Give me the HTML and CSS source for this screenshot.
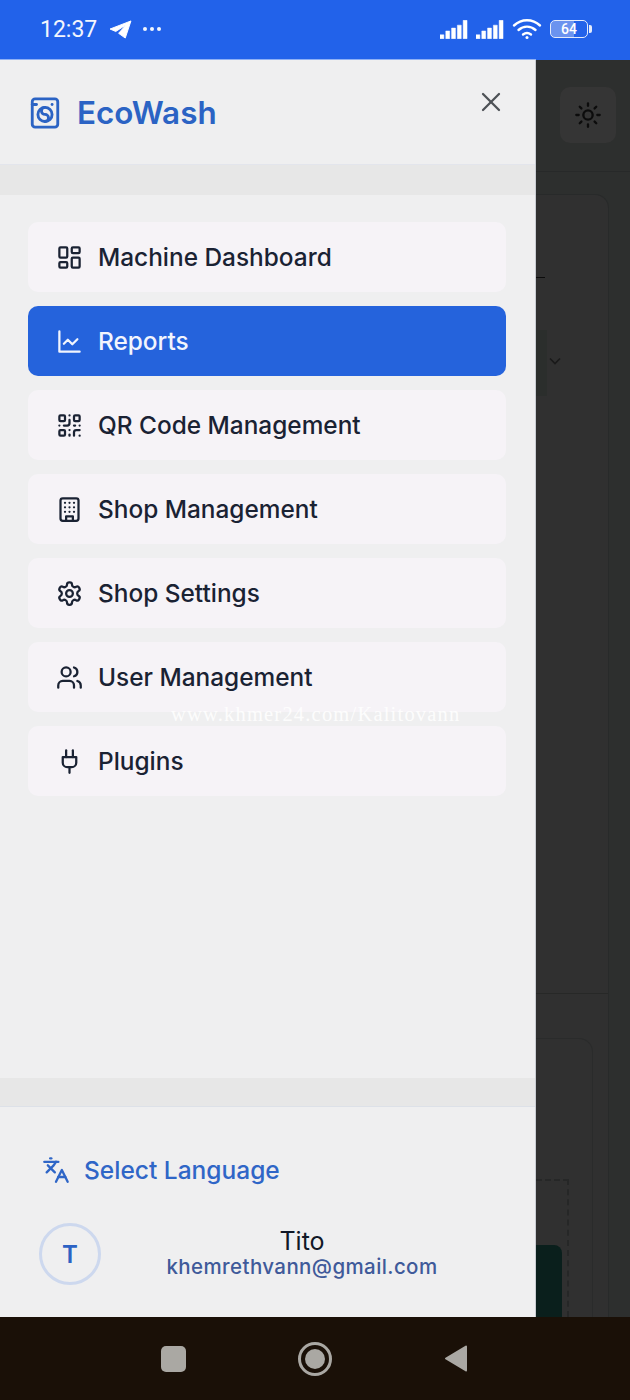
FILE: index.html
```html
<!DOCTYPE html>
<html lang="en">
<head>
    <meta charset="UTF-8">
    <meta name="viewport" content="width=device-width, initial-scale=1.0">
    <title>EcoWash</title>
    <link rel="stylesheet" href="styles.css">
</head>
<body>
    <div class="status-bar">
        <div class="status-left">
            <span class="clock">12:37</span>
            <svg class="tg-icon" viewBox="0 0 24 20"><path d="M23 1 1 9.500l6 2.600L18 5l-8 9 7 5z" fill="#fff" stroke="#fff" stroke-linejoin="round"/></svg>
            <span class="status-dots"><i></i><i></i><i></i></span>
        </div>
        <div class="status-right">
            <svg class="signal" viewBox="0 0 29 19"><path d="M0 15h4v4H0zM6 11h4v8H6zM12 8h4v11h-4zM18 5h4v14h-4zM24 0h4v19h-4z" fill="#fff" stroke="#fff" stroke-width=".5" stroke-linejoin="round"/></svg>
            <svg class="signal" viewBox="0 0 29 19"><path d="M0 15h4v4H0zM6 11h4v8H6zM12 8h4v11h-4zM18 5h4v14h-4zM24 0h4v19h-4z" fill="#fff" stroke="#fff" stroke-width=".5" stroke-linejoin="round"/></svg>
            <svg class="wifi" viewBox="0 0 30 22" fill="none" stroke="#fff" stroke-width="2.400" stroke-linecap="round"><path d="M2 7.500C9.500.5 20.500.5 28 7.500"/><path d="M6.500 12c5-4.500 12-4.500 17 0"/><path d="M11 16.500c2.500-2 5.500-2 8 0"/><circle cx="15" cy="19.500" r="1.500" fill="#fff" stroke="none"/></svg>
            <div class="battery">
                <div class="battery-body"><span class="battery-level">64</span></div>
                <div class="battery-tip"></div>
            </div>
        </div>
    </div>

    <div class="screen">
        <aside class="drawer">
            <header class="drawer-head">
                <div class="brand">
                    <svg class="brand-icon" viewBox="0 0 24 24"><path d="M3 6h3"/><path d="M17 6h.01"/><rect width="18" height="20" x="3" y="2" rx="2"/><circle cx="12" cy="13" r="5"/><path d="M12 18a2.500 2.500 0 0 0 0-5 2.500 2.500 0 0 1 0-5"/></svg>
                    <span>EcoWash</span>
                </div>
                <svg class="close-icon" viewBox="0 0 24 24"><path d="M18 6 6 18"/><path d="m6 6 12 12"/></svg>
            </header>
            <div class="band"></div>

            <nav class="menu">
                <a class="menu-item">
                    <svg class="icon" viewBox="0 0 24 24"><rect width="7" height="9" x="3" y="3" rx="1"/><rect width="7" height="5" x="14" y="3" rx="1"/><rect width="7" height="9" x="14" y="12" rx="1"/><rect width="7" height="5" x="3" y="16" rx="1"/></svg>
                    Machine Dashboard
                </a>
                <a class="menu-item active">
                    <svg class="icon" viewBox="0 0 24 24"><path d="M3 3v18h18"/><path d="m19 10-4.500 4.500-4-4L7 14"/></svg>
                    Reports
                </a>
                <a class="menu-item">
                    <svg class="icon" viewBox="0 0 24 24"><rect width="5" height="5" x="3" y="3" rx="1"/><rect width="5" height="5" x="16" y="3" rx="1"/><rect width="5" height="5" x="3" y="16" rx="1"/><path d="M21 16h-3a2 2 0 0 0-2 2v3"/><path d="M21 21v.01"/><path d="M12 7v3a2 2 0 0 1-2 2H7"/><path d="M3 12h.01"/><path d="M12 3h.01"/><path d="M12 16v.01"/><path d="M16 12h1"/><path d="M21 12v.01"/><path d="M12 21v-1"/></svg>
                    QR Code Management
                </a>
                <a class="menu-item">
                    <svg class="icon" viewBox="0 0 24 24"><rect width="16" height="20" x="4" y="2" rx="2"/><path d="M9 22v-4h6v4"/><path d="M8 6h.01M16 6h.01M12 6h.01M12 10h.01M12 14h.01M16 10h.01M16 14h.01M8 10h.01M8 14h.01"/></svg>
                    Shop Management
                </a>
                <a class="menu-item">
                    <svg class="icon" viewBox="0 0 24 24"><path d="M12.220 2h-.44a2 2 0 0 0-2 2v.18a2 2 0 0 1-1 1.730l-.43.25a2 2 0 0 1-2 0l-.15-.08a2 2 0 0 0-2.730.73l-.22.38a2 2 0 0 0 .73 2.730l.15.1a2 2 0 0 1 1 1.720v.51a2 2 0 0 1-1 1.740l-.15.09a2 2 0 0 0-.73 2.730l.22.38a2 2 0 0 0 2.730.73l.15-.08a2 2 0 0 1 2 0l.43.25a2 2 0 0 1 1 1.730V20a2 2 0 0 0 2 2h.44a2 2 0 0 0 2-2v-.18a2 2 0 0 1 1-1.730l.43-.25a2 2 0 0 1 2 0l.15.08a2 2 0 0 0 2.730-.73l.22-.39a2 2 0 0 0-.73-2.730l-.15-.08a2 2 0 0 1-1-1.740v-.5a2 2 0 0 1 1-1.740l.15-.09a2 2 0 0 0 .73-2.730l-.22-.38a2 2 0 0 0-2.730-.73l-.15.08a2 2 0 0 1-2 0l-.43-.25a2 2 0 0 1-1-1.730V4a2 2 0 0 0-2-2z"/><circle cx="12" cy="12" r="3"/></svg>
                    Shop Settings
                </a>
                <a class="menu-item">
                    <svg class="icon" viewBox="0 0 24 24"><path d="M16 21v-2a4 4 0 0 0-4-4H6a4 4 0 0 0-4 4v2"/><circle cx="9" cy="7" r="4"/><path d="M22 21v-2a4 4 0 0 0-3-3.870"/><path d="M16 3.130a4 4 0 0 1 0 7.750"/></svg>
                    User Management
                </a>
                <a class="menu-item">
                    <svg class="icon" viewBox="0 0 24 24"><path d="M12 22v-5"/><path d="M9 8V2"/><path d="M15 8V2"/><path d="M18 8v5a4 4 0 0 1-4 4h-4a4 4 0 0 1-4-4V8Z"/></svg>
                    Plugins
                </a>
            </nav>

            <div class="band band-low"></div>
            <footer class="drawer-foot">
                <div class="language">
                    <svg class="lang-icon" viewBox="0 0 24 24"><path d="m5 8 6 6"/><path d="m4 14 6-6 2-3"/><path d="M2 5h12"/><path d="M7 2h1"/><path d="m22 22-5-10-5 10"/><path d="M14 18h6"/></svg>
                    <span>Select Language</span>
                </div>
                <div class="user">
                    <div class="avatar">T</div>
                    <div class="user-info">
                        <div class="user-name">Tito</div>
                        <div class="user-mail">khemrethvann@gmail.com</div>
                    </div>
                </div>
            </footer>
        </aside>

        <!-- page behind the drawer, dimmed -->
        <div class="backdrop">
            <div class="back-head">
                <div class="theme-btn">
                    <svg class="sun-icon" viewBox="0 0 24 24"><circle cx="12" cy="12" r="4"/><path d="M12 2v2M12 20v2M4.930 4.930l1.410 1.410M17.660 17.660l1.410 1.410M2 12h2M20 12h2M6.340 17.660l-1.410 1.410M19.070 4.930l-1.410 1.410"/></svg>
                </div>
            </div>
            <div class="back-panel">
                <div class="back-rule"></div>
                <div class="back-select">
                    <svg class="chevron" viewBox="0 0 24 24"><path d="m6 9 6 6 6-6"/></svg>
                </div>
                <div class="back-split"></div>
                <div class="back-card">
                    <div class="back-dashed">
                        <div class="back-button"></div>
                    </div>
                </div>
            </div>
        </div>

        <div class="watermark">www.khmer24.com/Kalitovann</div>
    </div>

    <div class="nav-bar">
        <div class="nav-square"></div>
        <div class="nav-circle"><div class="nav-dot"></div></div>
        <svg class="nav-back" viewBox="0 0 24 28"><path d="M22 2 2 14l20 12z" fill="#aaa8a3" stroke="#aaa8a3" stroke-width="2" stroke-linejoin="round"/></svg>
    </div>
</body>
</html>
```

FILE: styles.css
```css
* {
    box-sizing: border-box;
}
html, body {
    margin: 0;
    padding: 0;
}
body {
    width: 630px;
    height: 1400px;
    display: flex;
    flex-direction: column;
    overflow: hidden;
    font-family: 'Inter', 'Liberation Sans', sans-serif;
    background: #2f2f2f;
}

/* phone status bar */
.status-bar {
    height: 60px;
    flex: none;
    display: flex;
    justify-content: space-between;
    align-items: center;
    padding: 0 38px 2px 40px;
    background: #2262ea;
    color: #fff;
}
.status-left, .status-right {
    display: flex;
    align-items: center;
}
.clock {
    font-family: 'Roboto', sans-serif;
    font-size: 23px;
    color: #f3f6fd;
}
.tg-icon {
    width: 23px;
    height: 19px;
    margin-left: 12px;
}
.status-dots {
    display: flex;
    gap: 3px;
    margin-left: 11px;
}
.status-dots i {
    width: 4px;
    height: 4px;
    border-radius: 50%;
    background: #f3f6fd;
}
.signal {
    width: 28px;
    height: 19px;
    margin-right: 8px;
}
.wifi {
    width: 30px;
    height: 22px;
}
.battery {
    display: flex;
    align-items: center;
    margin-left: 8px;
}
.battery-body {
    width: 38px;
    height: 18px;
    border: 1.500px solid #e4ebfb;
    border-radius: 5px;
    display: flex;
    align-items: center;
    justify-content: center;
    background: linear-gradient(90deg, #6b93ef 64%, transparent 64%);
}
.battery-level {
    font-family: 'Roboto', sans-serif;
    font-size: 14px;
    font-weight: 500;
    color: #fff;
}
.battery-tip {
    width: 3px;
    height: 8px;
    margin-left: 1px;
    border-radius: 0 2px 2px 0;
    background: #e4ebfb;
}

.screen {
    position: relative;
    flex: 1;
    display: flex;
    min-height: 0;
}

/* drawer */
.drawer {
    width: 536px;
    flex: none;
    display: flex;
    flex-direction: column;
    background: #efeff0;
    border-right: 1px solid #c9ccd2;
    box-shadow: 0 -1px 0 #8fb0f5;
}
.drawer-head {
    height: 105px;
    flex: none;
    display: flex;
    justify-content: space-between;
    padding: 26px 28px 0 30px;
    border-bottom: 1px solid #e3e5ec;
}
.brand {
    display: flex;
    align-items: center;
    gap: 15px;
    height: 54px;
    font-size: 31.400px;
    font-weight: 600;
    color: #2b63c4;
}
.brand-icon {
    width: 34px;
    height: 34px;
    margin-left: -2px;
    fill: none;
    stroke: #2b63c4;
    stroke-width: 2;
    stroke-linecap: round;
    stroke-linejoin: round;
}
.close-icon {
    width: 32px;
    height: 32px;
    fill: none;
    stroke: #4d5156;
    stroke-width: 1.700;
    stroke-linecap: round;
}
.band {
    height: 30px;
    flex: none;
    background: #e7e7e7;
}
.band-low {
    height: 29px;
    border-bottom: 1px solid #dde1e8;
}
.menu {
    flex: 1;
    display: flex;
    flex-direction: column;
    gap: 14px;
    padding: 27px 29px 0 28px;
}
.menu-item {
    height: 70px;
    display: flex;
    align-items: center;
    gap: 15px;
    padding-left: 28px;
    border-radius: 10px;
    background: #f6f3f7;
    color: #1a2233;
    font-size: 24.400px;
    font-weight: 500;
}
.menu-item.active {
    background: #2563dc;
    color: #f2f5fd;
}
.icon {
    width: 27px;
    height: 27px;
    flex: none;
    fill: none;
    stroke: currentColor;
    stroke-width: 2;
    stroke-linecap: round;
    stroke-linejoin: round;
}
.drawer-foot {
    height: 210px;
    flex: none;
    padding: 45px 32px 0 39px;
}
.language {
    display: flex;
    align-items: center;
    gap: 14px;
    height: 36px;
    padding-left: 3px;
    color: #2f66c7;
    font-size: 24.500px;
    font-weight: 500;
}
.lang-icon {
    width: 28px;
    height: 28px;
    fill: none;
    stroke: #2f66c7;
    stroke-width: 2;
    stroke-linecap: round;
    stroke-linejoin: round;
}
.user {
    display: flex;
    align-items: center;
    margin-top: 35px;
}
.avatar {
    width: 62px;
    height: 62px;
    flex: none;
    display: flex;
    align-items: center;
    justify-content: center;
    border: 3px solid #cdd8ee;
    border-radius: 50%;
    color: #2c62c4;
    font-size: 24px;
    font-weight: 600;
}
.user-info {
    flex: 1;
    padding-bottom: 2px;
    text-align: center;
}
.user-name {
    font-size: 25px;
    line-height: 28px;
    color: #111827;
}
.user-mail {
    font-size: 20.500px;
    font-weight: 500;
    line-height: 24px;
    letter-spacing: 0.400px;
    color: #3f5a9a;
}

/* dimmed page behind the drawer */
.backdrop {
    flex: 1;
    min-width: 0;
    display: flex;
    flex-direction: column;
    background: #2d2f2e;
}
.back-head {
    height: 112px;
    flex: none;
    display: flex;
    justify-content: flex-end;
    padding: 27px 14px 0 0;
    border-bottom: 1px solid #272929;
}
.theme-btn {
    width: 56px;
    height: 56px;
    display: flex;
    align-items: center;
    justify-content: center;
    border-radius: 10px;
    background: #353535;
}
.sun-icon {
    width: 28px;
    height: 28px;
    fill: none;
    stroke: #0c0c0c;
    stroke-width: 2;
    stroke-linecap: round;
}
.back-panel {
    flex: 1;
    display: flex;
    flex-direction: column;
    margin: 22px 21px 0 0;
    padding-top: 82px;
    border: 1px solid #282a2a;
    border-left: none;
    border-bottom: none;
    border-radius: 0 14px 0 0;
    background: #303030;
}
.back-rule {
    width: 9px;
    height: 1px;
    background: #0c0c0c;
}
.back-select {
    width: 11px;
    height: 66px;
    margin-top: 52px;
    background: #2b2e2c;
    position: relative;
}
.chevron {
    position: absolute;
    left: 9px;
    top: 21px;
    width: 20px;
    height: 20px;
    fill: none;
    stroke: #1a1a1a;
    stroke-width: 2;
}
.back-split {
    height: 1px;
    margin-top: 597px;
    background: #272827;
}
.back-card {
    flex: 1;
    margin: 44px 15px 0 0;
    padding-top: 140px;
    border: 1px solid #2a2b2b;
    border-left: none;
    border-bottom: none;
    border-radius: 0 14px 0 0;
}
.back-dashed {
    height: 100%;
    margin-right: 23px;
    padding: 64px 7px 0 0;
    border-top: 2px dashed #262727;
    border-right: 2px dashed #262727;
}
.back-button {
    width: 26px;
    height: 100%;
    margin-left: auto;
    border-radius: 0 8px 0 0;
    background: #0a1f1c;
}
.watermark {
    position: absolute;
    left: 171px;
    top: 643px;
    font-family: 'Liberation Serif', serif;
    font-size: 20.500px;
    letter-spacing: 1.200px;
    color: rgba(255, 255, 255, 0.85);
}

/* android nav buttons */
.nav-bar {
    height: 83px;
    flex: none;
    display: flex;
    align-items: center;
    background: #1a1007;
    padding: 0 162px 0 161px;
    justify-content: space-between;
}
.nav-square {
    width: 25px;
    height: 26px;
    border-radius: 5px;
    background: #aaa8a3;
}
.nav-circle {
    width: 34px;
    height: 34px;
    display: flex;
    align-items: center;
    justify-content: center;
    border: 3px solid #aaa8a3;
    border-radius: 50%;
}
.nav-dot {
    width: 20px;
    height: 20px;
    border-radius: 50%;
    background: #aaa8a3;
}
.nav-back {
    width: 24px;
    height: 29px;
}
```
